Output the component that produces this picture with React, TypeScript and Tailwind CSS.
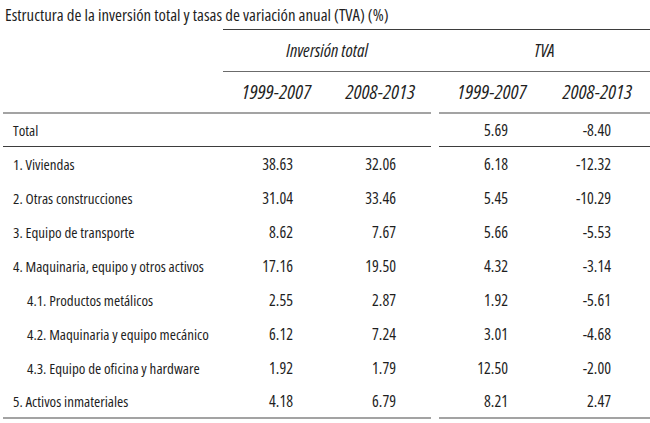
type RowData = {
  label: string;
  indent?: boolean;
  values: [string, string, string, string];
};

const ROWS: RowData[] = [
  { label: '1. Viviendas', values: ['38.63', '32.06', '6.18', '-12.32'] },
  { label: '2. Otras construcciones', values: ['31.04', '33.46', '5.45', '-10.29'] },
  { label: '3. Equipo de transporte', values: ['8.62', '7.67', '5.66', '-5.53'] },
  { label: '4. Maquinaria, equipo y otros activos', values: ['17.16', '19.50', '4.32', '-3.14'] },
  { label: '4.1. Productos metálicos', indent: true, values: ['2.55', '2.87', '1.92', '-5.61'] },
  { label: '4.2. Maquinaria y equipo mecánico', indent: true, values: ['6.12', '7.24', '3.01', '-4.68'] },
  { label: '4.3. Equipo de oficina y hardware', indent: true, values: ['1.92', '1.79', '12.50', '-2.00'] },
  { label: '5. Activos inmateriales', values: ['4.18', '6.79', '8.21', '2.47'] },
];

function DataRow({ row, last }: { row: RowData; last: boolean }) {
  const border = last ? 'border-b-2 border-[#a3a3a3]' : '';
  return (
    <div className="flex h-[34px]">
      <div className={`flex w-[428px] items-center ${border}`}>
        <div className={`w-[220px] whitespace-nowrap text-[15px] ${row.indent ? 'pl-[24px]' : 'pl-[10px]'}`}>
          {row.label}
        </div>
        <div className="w-[107px] pr-[37px] text-right">{row.values[0]}</div>
        <div className="w-[101px] pr-[35px] text-right">{row.values[1]}</div>
      </div>
      <div className="w-[8px]" />
      <div className={`flex flex-1 items-center ${border}`}>
        <div className="w-[106px] pr-[37px] text-right">{row.values[2]}</div>
        <div className="flex-1 pr-[39px] text-right">{row.values[3]}</div>
      </div>
    </div>
  );
}

export default function App() {
  return (
    <div className="h-[423px] w-[650px] overflow-hidden bg-white font-['Open_Sans',sans-serif] font-stretch-[75%] text-[16px] text-[#1f1f1f]">
      {/* title */}
      <div className="flex h-[29px] items-center whitespace-nowrap pl-[5px] text-[16.8px]">
        Estructura de la inversión total y tasas de variación anual (TVA) (%)
      </div>

      {/* group headings */}
      <div className="ml-[223px] flex h-[43px] items-center border-y border-t-[#3d3d3d] border-b-[#6b6b6b] text-[18px] italic">
        <div className="w-[208px] text-center">Inversión total</div>
        <div className="flex-1 pl-[8px] text-center">TVA</div>
      </div>

      <div className="ml-[3px]">
        {/* period headings */}
        <div className="flex h-[42px] text-[20px] italic tracking-[0.3px]">
          <div className="flex w-[428px] items-center border-b-2 border-[#a3a3a3]">
            <div className="w-[220px]" />
            <div className="w-[107px] text-center">1999-2007</div>
            <div className="w-[101px] text-center">2008-2013</div>
          </div>
          <div className="w-[8px]" />
          <div className="flex flex-1 items-center border-b-2 border-[#a3a3a3]">
            <div className="w-[106px] text-center">1999-2007</div>
            <div className="flex-1 text-center">2008-2013</div>
          </div>
        </div>

        {/* total */}
        <div className="flex h-[33px]">
          <div className="flex w-[428px] items-center border-b border-[#3d3d3d]">
            <div className="pl-[10px] text-[15px]">Total</div>
          </div>
          <div className="w-[8px]" />
          <div className="flex flex-1 items-center border-b border-[#3d3d3d]">
            <div className="w-[106px] pr-[37px] text-right">5.69</div>
            <div className="flex-1 pr-[39px] text-right">-8.40</div>
          </div>
        </div>

        {ROWS.map((row, i) => (
          <DataRow key={row.label} row={row} last={i === ROWS.length - 1} />
        ))}
      </div>
    </div>
  );
}
